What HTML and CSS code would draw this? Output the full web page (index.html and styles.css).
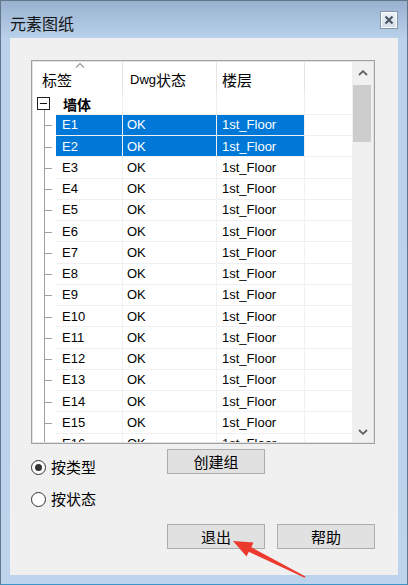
FILE: index.html
```html
<!DOCTYPE html>
<html lang="zh">
<head>
<meta charset="utf-8">
<title>元素图纸</title>
<link rel="stylesheet" href="styles.css">
</head>
<body>
<div class="window">
  <div class="titlebar">
    <span class="title">元素图纸</span>
    <div class="close">
      <svg width="10" height="10" viewBox="0 0 10 10"><path d="M1.5 1.5 L8.5 8.5 M8.5 1.5 L1.5 8.5" stroke="#4b5562" stroke-width="2.2" fill="none"/></svg>
    </div>
  </div>
  <div class="client">
    <div class="list">
      <div class="grid">
        <div class="thead">
          <div class="th c1"><span class="zh">标签</span>
            <svg class="sort" width="10" height="6" viewBox="0 0 10 6"><path d="M1 5.5 L5 1.5 L9 5.5" stroke="#9a9a9a" stroke-width="1.2" fill="none"/></svg>
          </div>
          <div class="th c2">Dwg<span class="zh">状态</span></div>
          <div class="th c3"><span class="zh">楼层</span></div>
          <div class="th c4"></div>
        </div>
        <div class="tbody">
          <div class="row group">
            <div class="c1"><span class="tree"><span class="box"></span></span><span class="lbl gname">墙体</span></div>
            <div class="cell c2"></div><div class="cell c3"></div><div class="cell c4"></div>
          </div>
          <div class="row sel"><div class="c1"><span class="tree"></span><span class="lbl">E1</span></div><div class="cell c2">OK</div><div class="cell c3">1st_Floor</div><div class="cell c4"></div></div>
          <div class="row sel"><div class="c1"><span class="tree"></span><span class="lbl">E2</span></div><div class="cell c2">OK</div><div class="cell c3">1st_Floor</div><div class="cell c4"></div></div>
          <div class="row"><div class="c1"><span class="tree"></span><span class="lbl">E3</span></div><div class="cell c2">OK</div><div class="cell c3">1st_Floor</div><div class="cell c4"></div></div>
          <div class="row"><div class="c1"><span class="tree"></span><span class="lbl">E4</span></div><div class="cell c2">OK</div><div class="cell c3">1st_Floor</div><div class="cell c4"></div></div>
          <div class="row"><div class="c1"><span class="tree"></span><span class="lbl">E5</span></div><div class="cell c2">OK</div><div class="cell c3">1st_Floor</div><div class="cell c4"></div></div>
          <div class="row"><div class="c1"><span class="tree"></span><span class="lbl">E6</span></div><div class="cell c2">OK</div><div class="cell c3">1st_Floor</div><div class="cell c4"></div></div>
          <div class="row"><div class="c1"><span class="tree"></span><span class="lbl">E7</span></div><div class="cell c2">OK</div><div class="cell c3">1st_Floor</div><div class="cell c4"></div></div>
          <div class="row"><div class="c1"><span class="tree"></span><span class="lbl">E8</span></div><div class="cell c2">OK</div><div class="cell c3">1st_Floor</div><div class="cell c4"></div></div>
          <div class="row"><div class="c1"><span class="tree"></span><span class="lbl">E9</span></div><div class="cell c2">OK</div><div class="cell c3">1st_Floor</div><div class="cell c4"></div></div>
          <div class="row"><div class="c1"><span class="tree"></span><span class="lbl">E10</span></div><div class="cell c2">OK</div><div class="cell c3">1st_Floor</div><div class="cell c4"></div></div>
          <div class="row"><div class="c1"><span class="tree"></span><span class="lbl">E11</span></div><div class="cell c2">OK</div><div class="cell c3">1st_Floor</div><div class="cell c4"></div></div>
          <div class="row"><div class="c1"><span class="tree"></span><span class="lbl">E12</span></div><div class="cell c2">OK</div><div class="cell c3">1st_Floor</div><div class="cell c4"></div></div>
          <div class="row"><div class="c1"><span class="tree"></span><span class="lbl">E13</span></div><div class="cell c2">OK</div><div class="cell c3">1st_Floor</div><div class="cell c4"></div></div>
          <div class="row"><div class="c1"><span class="tree"></span><span class="lbl">E14</span></div><div class="cell c2">OK</div><div class="cell c3">1st_Floor</div><div class="cell c4"></div></div>
          <div class="row"><div class="c1"><span class="tree"></span><span class="lbl">E15</span></div><div class="cell c2">OK</div><div class="cell c3">1st_Floor</div><div class="cell c4"></div></div>
          <div class="row"><div class="c1"><span class="tree"></span><span class="lbl">E16</span></div><div class="cell c2">OK</div><div class="cell c3">1st_Floor</div><div class="cell c4"></div></div>
        </div>
      </div>
      <div class="vscroll">
        <div class="sb-btn"><svg width="10" height="6" viewBox="0 0 10 6"><path d="M1 5 L5 1.2 L9 5" stroke="#606060" stroke-width="1.8" fill="none"/></svg></div>
        <div class="thumb"></div>
        <div class="sb-space"></div>
        <div class="sb-btn"><svg width="10" height="6" viewBox="0 0 10 6"><path d="M1 1 L5 4.8 L9 1" stroke="#606060" stroke-width="1.8" fill="none"/></svg></div>
      </div>
    </div>
    <div class="controls">
      <label class="radio radio1"><span class="rc on"></span><span>按类型</span></label>
      <div class="btn b-create">创建组</div>
      <label class="radio radio2"><span class="rc"></span><span>按状态</span></label>
      <div class="btn b-exit">退出</div>
      <div class="btn b-help">帮助</div>
    </div>
  </div>
  <div class="bottomframe"></div>
  <svg class="arrow" width="408" height="585" viewBox="0 0 408 585">
    <polygon points="233,541 253.5,542.5 251.3,547.3 305.5,576.4 304.6,577.8 248.8,551.8 246.5,556.5" fill="#ec3a2f"/>
  </svg>
</div>
</body>
</html>
```

FILE: styles.css
```css
* { box-sizing: border-box; }

body {
  margin: 0;
  background: #ffffff;
  font-family: "Liberation Sans", "Noto Sans CJK SC", sans-serif;
}

.window {
  position: relative;
  width: 408px;
  height: 585px;
  border: 1px solid #64768a;
  border-bottom-color: #3d94c6;
  background: linear-gradient(#98b1cf 0, #b9d1ea 37px, #bcd4ec 100%);
  display: flex;
  flex-direction: column;
}

.titlebar {
  flex: none;
  height: 37px;
  display: flex;
  justify-content: space-between;
  align-items: flex-start;
  padding: 0 9px 0 9px;
}

.title {
  margin-top: 12px;
  font: 16px/20px "Noto Sans CJK SC", sans-serif;
  color: #161616;
}

.close {
  margin-top: 10px;
  width: 18px;
  height: 18px;
  border: 1px solid #8596ab;
  background: linear-gradient(#eef3f8, #d3dde9);
  box-shadow: inset 0 0 0 1px #fafcfe;
  display: flex;
  align-items: center;
  justify-content: center;
}

.client {
  flex: none;
  margin: 0 9px;
  height: 537px;
  background: #f0f0f0;
  padding: 22px 0 0 21px;
}

.bottomframe { flex: 1; }

.list {
  width: 344px;
  height: 384px;
  border: 1px solid #a0a0a0;
  box-shadow: inset 0 0 0 1px #e2e2e2;
  padding: 1px;
  background: #ffffff;
  display: flex;
}

.grid {
  width: 319px;
  flex: none;
  overflow: hidden;
  background: #ffffff;
}

.zh {
  font-family: "Noto Sans CJK SC", sans-serif;
  font-size: 15px;
}

.thead {
  display: flex;
  height: 31.5px;
}

.th {
  position: relative;
  flex: none;
  display: flex;
  align-items: center;
  padding-top: 4px;
  font-size: 13px;
  color: #000;
  border-right: 1px solid #e5e5e5;
  white-space: nowrap;
}

.th.c1 { padding-left: 9px; }
.th.c2 { padding-left: 7px; }
.th.c3 { padding-left: 5px; }
.th.c4 { border-right: none; }

.sort {
  position: absolute;
  left: 42px;
  top: 0;
}

.c1 { width: 90px; }
.c2 { width: 94px; }
.c3 { width: 88px; }
.c4 { width: 47px; }

.row {
  display: flex;
  height: 21.25px;
}

.row > .c1 {
  flex: none;
  display: flex;
}

.tree {
  position: relative;
  width: 23px;
  flex: none;
}

.tree::before {
  content: "";
  position: absolute;
  left: 11px;
  top: 0;
  bottom: 0;
  width: 1px;
  background: #a0a0a0;
}

.tree::after {
  content: "";
  position: absolute;
  left: 12px;
  top: 50%;
  width: 7px;
  height: 1px;
  background: #a0a0a0;
}

.group .tree::before { top: calc(50% + 6px); }
.group .tree::after { display: none; }

.box {
  position: absolute;
  left: 4px;
  top: calc(50% - 7px);
  width: 13px;
  height: 13px;
  border: 1px solid #222;
  background: #fff;
}

.box::after {
  content: "";
  position: absolute;
  left: 2px;
  right: 2px;
  top: 5px;
  height: 1px;
  background: #111;
}

.lbl, .cell {
  display: flex;
  align-items: center;
  flex: none;
  font-size: 13px;
  color: #000;
  white-space: nowrap;
  overflow: hidden;
  border-right: 1px solid #f0f0f0;
  border-bottom: 1px solid #f0f0f0;
}

.lbl { flex: 1; padding-left: 6px; }
.cell.c2 { padding-left: 4px; }
.cell.c3 { padding-left: 5px; }
.cell.c4 { border-right: none; }

.gname {
  font-family: "Noto Sans CJK SC", sans-serif;
  font-size: 14px;
  font-weight: bold;
  padding-left: 7px;
}

.sel .lbl, .sel .c2, .sel .c3 {
  background: #0078d7;
  color: #ffffff;
}

.vscroll {
  width: 21px;
  flex: none;
  background: #f0f0f0;
  display: flex;
  flex-direction: column;
}

.sb-btn {
  height: 21px;
  flex: none;
  display: flex;
  align-items: center;
  justify-content: center;
}

.thumb {
  flex: none;
  height: 57px;
  margin: 2px 2px 0 1px;
  background: #cdcdcd;
}

.sb-space { flex: 1; }

.controls {
  display: grid;
  grid-template-columns: 124px 98px 98px;
  grid-template-rows: 25px 50px 25px;
  column-gap: 12px;
  margin-top: 5px;
}

.btn {
  border: 1px solid #adadad;
  background: #e1e1e1;
  font: 15px/23px "Noto Sans CJK SC", sans-serif;
  color: #000;
  text-align: center;
}

.b-create { grid-row: 1; grid-column: 2; }
.b-exit { grid-row: 3; grid-column: 2; }
.b-help { grid-row: 3; grid-column: 3; }

.radio {
  grid-column: 1;
  display: flex;
  align-items: center;
  gap: 5px;
  font: 15px/16px "Noto Sans CJK SC", sans-serif;
  color: #000;
}

.radio1 { grid-row: 1; align-self: end; margin-bottom: -1px; }
.radio2 { grid-row: 2; align-self: start; margin-top: 17px; }

.rc {
  width: 15px;
  height: 15px;
  border-radius: 50%;
  border: 1px solid #333;
  background: #fff;
  display: flex;
  align-items: center;
  justify-content: center;
}

.rc.on::after {
  content: "";
  width: 7px;
  height: 7px;
  border-radius: 50%;
  background: #333;
}

.arrow {
  position: absolute;
  left: -1px;
  top: -1px;
  pointer-events: none;
}
```
